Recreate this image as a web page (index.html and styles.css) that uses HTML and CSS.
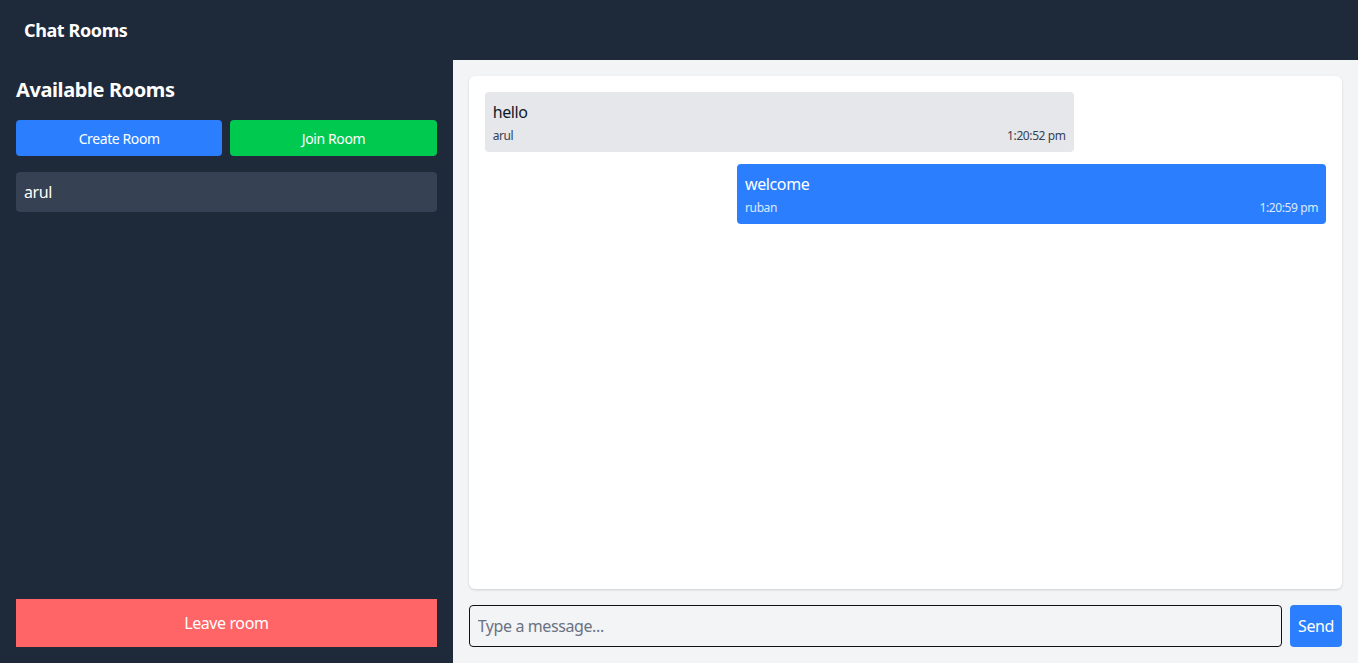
FILE: index.html
```html
<!DOCTYPE html>
<html>
<head>
<meta charset="utf-8">
<link rel="stylesheet" href="styles.css">
</head>
<body>
<div class="app">
  <header class="topbar"><span class="brand">Chat Rooms</span></header>
  <div class="body">
    <aside class="sidebar">
      <h2 class="side-title">Available Rooms</h2>
      <div class="actions">
        <button class="btn btn-blue">Create Room</button>
        <button class="btn btn-green">Join Room</button>
      </div>
      <ul class="rooms">
        <li class="room">arul</li>
      </ul>
      <button class="leave">Leave room</button>
    </aside>
    <main class="main">
      <section class="chat">
        <div class="msg msg-in">
          <div class="msg-text">hello</div>
          <div class="msg-meta"><span>arul</span><span>1:20:52 pm</span></div>
        </div>
        <div class="msg msg-out">
          <div class="msg-text">welcome</div>
          <div class="msg-meta"><span>ruban</span><span>1:20:59 pm</span></div>
        </div>
      </section>
      <form class="composer">
        <input class="input" type="text" placeholder="Type a message...">
        <button class="send" type="button">Send</button>
      </form>
    </main>
  </div>
</div>
</body>
</html>
```
FILE: styles.css
```css
* { box-sizing: border-box; }
html, body { margin: 0; padding: 0; height: 100%; }
body {
  font-family: "Noto Sans", "Open Sans", sans-serif;
  letter-spacing: -0.025em;
  background: #f3f4f6;
}
.app { display: flex; flex-direction: column; height: 663px; }
.topbar {
  height: 60px;
  background: #1e2939;
  display: flex;
  align-items: center;
  padding: 0 24px;
}
.brand { color: #fff; font-weight: 700; font-size: 18px; }
.body { flex: 1; display: flex; min-height: 0; }
.sidebar {
  width: 33.3333%;
  background: #1e2939;
  padding: 16px;
  display: flex;
  flex-direction: column;
}
.side-title {
  margin: 0 0 16px;
  color: #fff;
  font-size: 20px;
  line-height: 28px;
  font-weight: 700;
}
.actions { display: grid; grid-template-columns: 1fr 1fr; gap: 8px; }
.btn {
  height: 36px;
  border: 0;
  border-radius: 4px;
  color: #fff;
  font-family: inherit;
  letter-spacing: inherit;
  font-size: 14px;
}
.btn-blue { background: #2b7fff; }
.btn-green { background: #00c950; }
.rooms { list-style: none; margin: 16px 0 0; padding: 0; flex: 1; }
.room {
  background: #364153;
  color: #fff;
  border-radius: 4px;
  padding: 8px;
  font-size: 16px;
  line-height: 24px;
}
.leave {
  height: 48px;
  border: 0;
  background: #ff6467;
  color: #fff;
  font-family: inherit;
  letter-spacing: inherit;
  font-size: 16px;
}
.main {
  flex: 1;
  padding: 16px;
  display: flex;
  flex-direction: column;
  gap: 16px;
}
.chat {
  flex: 1;
  background: #fff;
  border-radius: 6px;
  box-shadow: 0 1px 3px rgba(0,0,0,0.1), 0 1px 2px rgba(0,0,0,0.06);
  padding: 16px;
  display: flex;
  flex-direction: column;
  gap: 12px;
}
.msg {
  width: 70%;
  border-radius: 4px;
  padding: 8px;
}
.msg-in { background: #e5e7eb; color: #101828; align-self: flex-start; }
.msg-out { background: #2b7fff; color: #fff; align-self: flex-end; }
.msg-text { font-size: 16px; line-height: 24px; }
.msg-meta {
  display: flex;
  justify-content: space-between;
  font-size: 12px;
  line-height: 16px;
  margin-top: 4px;
}
.msg-in .msg-meta { color: #364153; }
.msg-out .msg-meta { color: #dbeafe; }
.composer { display: flex; gap: 8px; height: 42px; }
.input {
  flex: 1;
  border: 1px solid #111;
  border-radius: 4px;
  background: #f3f4f6;
  padding: 8px;
  font-family: inherit;
  letter-spacing: inherit;
  font-size: 16px;
  color: #111;
}
.input::placeholder { color: #6a7282; }
.send {
  border: 0;
  border-radius: 4px;
  background: #2b7fff;
  color: #fff;
  padding: 0 8px;
  font-family: inherit;
  letter-spacing: inherit;
  font-size: 16px;
}
```
